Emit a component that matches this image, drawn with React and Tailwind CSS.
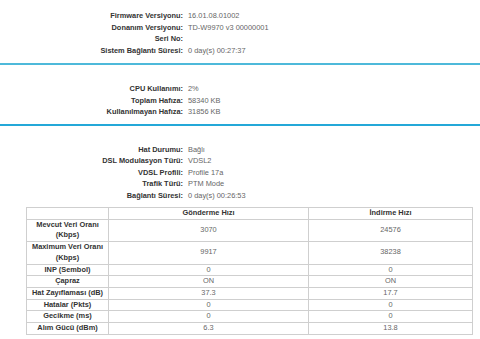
const general = [
  ['Firmware Versiyonu:', '16.01.08.01002'],
  ['Donanım Versiyonu:', 'TD-W9970 v3 00000001'],
  ['Seri No:', ''],
  ['Sistem Bağlantı Süresi:', '0 day(s) 00:27:37'],
];

const memory = [
  ['CPU Kullanımı:', '2%'],
  ['Toplam Hafıza:', '58340 KB'],
  ['Kullanılmayan Hafıza:', '31856 KB'],
];

const dsl = [
  ['Hat Durumu:', 'Bağlı'],
  ['DSL Modulasyon Türü:', 'VDSL2'],
  ['VDSL Profili:', 'Profile 17a'],
  ['Trafik Türü:', 'PTM Mode'],
  ['Bağlantı Süresi:', '0 day(s) 00:26:53'],
];

const stats = [
  ['Mevcut Veri Oranı (Kbps)', '3070', '24576'],
  ['Maximum Veri Oranı (Kbps)', '9917', '38238'],
  ['INP (Sembol)', '0', '0'],
  ['Çapraz', 'ON', 'ON'],
  ['Hat Zayıflaması (dB)', '37.3', '17.7'],
  ['Hatalar (Pkts)', '0', '0'],
  ['Gecikme (ms)', '0', '0'],
  ['Alım Gücü (dBm)', '6.3', '13.8'],
];

function InfoRows({ rows }) {
  return (
    <div className="flex flex-col">
      {rows.map(([label, value]) => (
        <div key={label} className="flex h-[11.5px] items-center">
          <span className="w-[183px] shrink-0 text-right font-bold text-[#333]">{label}</span>
          <span className="pl-[5px] text-[#666]">{value}</span>
        </div>
      ))}
    </div>
  );
}

export default function App() {
  return (
    <div className="w-[480px] h-[339px] overflow-hidden bg-white text-[7.4px] leading-[11.5px]" style={{ fontFamily: '"Liberation Sans", Arial, sans-serif' }}>
      <div className="pt-[10px] pb-[7px]">
        <InfoRows rows={general} />
      </div>
      <div className="h-[2px] bg-[#4db9da]" />

      <div className="pt-[18px] pb-[6px]">
        <InfoRows rows={memory} />
      </div>
      <div className="h-[2px] bg-[#24a8d8]" />

      <div className="pt-[18px] pb-[6px]">
        <InfoRows rows={dsl} />
      </div>

      <div className="pl-[26px]">
        <table className="w-[447px] table-fixed border-collapse border border-[#cfcfcf] leading-[10.7px]">
          <colgroup>
            <col className="w-[82px]" />
            <col className="w-[200px]" />
            <col />
          </colgroup>
          <thead>
            <tr>
              <th className="border border-[#cfcfcf] p-0" />
              <th className="border border-[#cfcfcf] p-0 font-bold text-[#333]">Gönderme Hızı</th>
              <th className="border border-[#cfcfcf] p-0 font-bold text-[#333]">İndirme Hızı</th>
            </tr>
          </thead>
          <tbody>
            {stats.map(([label, up, down]) => (
              <tr key={label}>
                <td className="border border-[#cfcfcf] p-0 text-center font-bold text-[#333]">{label}</td>
                <td className="border border-[#cfcfcf] p-0 text-center text-[#666]">{up}</td>
                <td className="border border-[#cfcfcf] p-0 text-center text-[#666]">{down}</td>
              </tr>
            ))}
          </tbody>
        </table>
      </div>
    </div>
  );
}
